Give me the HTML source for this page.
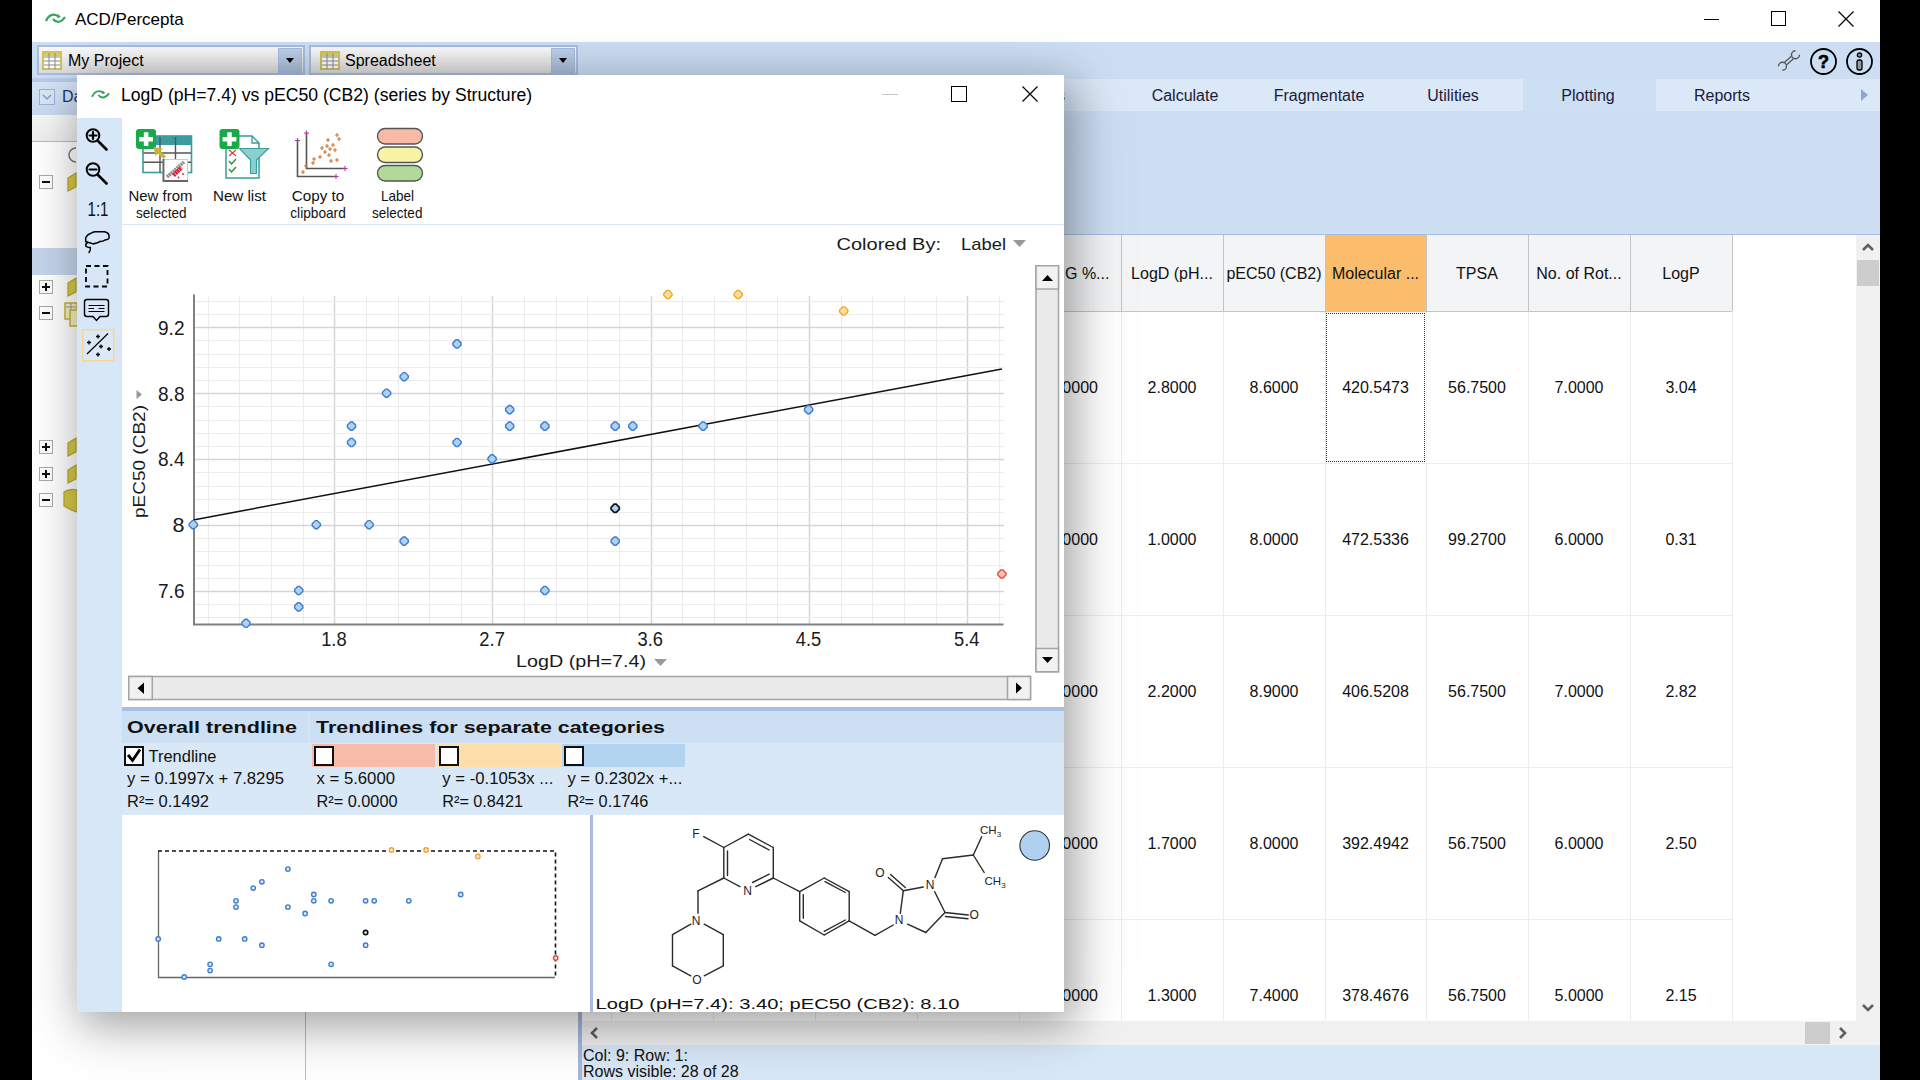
<!DOCTYPE html>
<html><head><meta charset="utf-8"><title>ACD/Percepta</title>
<style>
html,body{margin:0;padding:0;}
body{width:1920px;height:1080px;overflow:hidden;background:#000;position:relative;font-family:"Liberation Sans", sans-serif;}
.t{position:absolute;white-space:pre;line-height:1;font-family:"Liberation Sans", sans-serif;}
.b{position:absolute;box-sizing:border-box;}
svg{position:absolute;overflow:visible;}
</style></head><body>

<div class="b" style="left:32px;top:0px;width:1848px;height:1080px;background:#fff;"></div>
<div class="t" style="left:75px;top:11px;font-size:17px;color:#000;font-weight:400;">ACD/Percepta</div>
<svg style="left:44px;top:10px" width="24" height="18" viewBox="0 0 24 18">
<path d="M2 11 C5 4 11 3 15 7" stroke="#3aa35a" stroke-width="2.2" fill="none"/>
<path d="M9 9 C12 13 17 13 21 7" stroke="#3aa35a" stroke-width="2.2" fill="none"/>
<path d="M14 4 L17 7 L13 8 Z" fill="#3aa35a"/>
</svg>
<div class="b" style="left:1704px;top:19px;width:15px;height:1px;background:#000;"></div>
<div class="b" style="left:1771px;top:11px;width:15px;height:15px;border:1.3px solid #000;"></div>
<svg style="left:1838px;top:11px" width="16" height="16" viewBox="0 0 16 16"><path d="M0.5 0.5 L15.5 15.5 M15.5 0.5 L0.5 15.5" stroke="#000" stroke-width="1.2"/></svg>
<div class="b" style="left:32px;top:42px;width:1848px;height:37px;background:#cddef3;"></div>
<div class="b" style="left:37px;top:45px;width:268px;height:30px;border:2px solid #a9bde0;background:linear-gradient(#fafafa,#dcdcdc);"></div><div class="b" style="left:278px;top:48px;width:24px;height:25px;border:1.5px solid #a8bcdf;background:linear-gradient(#bcd1e8,#a9bdd6);"></div><svg style="left:286px;top:58px" width="8" height="5"><path d="M0 0 L8 0 L4 5 Z" fill="#000"/></svg><svg style="left:42px;top:51px" width="20" height="19" viewBox="0 0 20 19">
<rect x="1" y="1" width="18" height="17" fill="#fff" stroke="#c8b53a" stroke-width="1.6"/>
<rect x="2" y="2" width="16" height="3" fill="#d4d444"/>
<path d="M7 2 V18 M13 2 V18 M2 6 H18 M2 10 H18 M2 14 H18" stroke="#8c8c8c" stroke-width="1"/>
</svg><div class="t" style="left:68px;top:53px;font-size:16px;color:#000;font-weight:400;">My Project</div>
<div class="b" style="left:309px;top:45px;width:269px;height:30px;border:2px solid #a9bde0;background:linear-gradient(#fafafa,#dcdcdc);"></div><div class="b" style="left:551px;top:48px;width:24px;height:25px;border:1.5px solid #a8bcdf;background:linear-gradient(#bcd1e8,#a9bdd6);"></div><svg style="left:559px;top:58px" width="8" height="5"><path d="M0 0 L8 0 L4 5 Z" fill="#000"/></svg><svg style="left:320px;top:51px" width="20" height="19" viewBox="0 0 20 19">
<rect x="1" y="1" width="18" height="17" fill="#fff" stroke="#c8b53a" stroke-width="1.6"/>
<rect x="2" y="2" width="16" height="3" fill="#d4d444"/>
<path d="M7 2 V18 M13 2 V18 M2 6 H18 M2 10 H18 M2 14 H18" stroke="#8c8c8c" stroke-width="1"/>
</svg><div class="t" style="left:345px;top:53px;font-size:16px;color:#000;font-weight:400;">Spreadsheet</div>
<svg style="left:1777px;top:50px" width="24" height="22" viewBox="0 0 24 22">
<path d="M7.5 14.5 L16 7" stroke="#555" stroke-width="4.4" stroke-linecap="round"/>
<path d="M7.5 14.5 L16 7" stroke="#cddef3" stroke-width="1.8" stroke-linecap="round"/>
<path d="M22.5 4.8 A4 4 0 1 1 18.5 0.8" fill="#cddef3" stroke="#555" stroke-width="1.4"/>
<path d="M1.5 16.2 A4 4 0 1 1 5.5 20.2" fill="#cddef3" stroke="#555" stroke-width="1.4"/>
</svg>
<svg style="left:1809px;top:47px" width="30" height="30" viewBox="0 0 30 30">
<circle cx="14.5" cy="14.5" r="12.5" stroke="#000" stroke-width="1.8" fill="none"/>
<text x="14.5" y="21" font-family="Liberation Sans" font-weight="700" font-size="18" text-anchor="middle" fill="#000" stroke="#000" stroke-width="0.6">?</text>
</svg>
<svg style="left:1845px;top:47px" width="30" height="30" viewBox="0 0 30 30">
<circle cx="14.5" cy="14.5" r="12.5" stroke="#000" stroke-width="1.8" fill="none"/>
<circle cx="14.5" cy="8" r="2.2" fill="#888" stroke="#000" stroke-width="1.2"/>
<rect x="12" y="13" width="5" height="10" rx="2" fill="#999" stroke="#000" stroke-width="1.3"/>
</svg>
<div class="b" style="left:32px;top:79px;width:1848px;height:32px;background:#dae8f7;"></div>
<div class="b" style="left:1523px;top:79px;width:133px;height:32px;background:#cddff3;"></div>
<div class="t" style="left:1085px;width:200px;text-align:center;top:88px;font-size:16px;color:#1b1b3a">Calculate</div>
<div class="t" style="left:1219px;width:200px;text-align:center;top:88px;font-size:16px;color:#1b1b3a">Fragmentate</div>
<div class="t" style="left:1353px;width:200px;text-align:center;top:88px;font-size:16px;color:#1b1b3a">Utilities</div>
<div class="t" style="left:1488px;width:200px;text-align:center;top:88px;font-size:16px;color:#1b1b3a">Plotting</div>
<div class="t" style="left:1622px;width:200px;text-align:center;top:88px;font-size:16px;color:#1b1b3a">Reports</div>
<div class="t" style="left:1057px;top:88px;font-size:16px;color:#1b1b3a">s</div>
<svg style="left:1861px;top:89px" width="7" height="12"><path d="M0 0 L7 6 L0 12 Z" fill="#8fa6d6"/></svg>
<div class="b" style="left:32px;top:111px;width:1848px;height:124px;background:#cddef3;"></div>
<div class="b" style="left:32px;top:234px;width:1848px;height:1px;background:#a6bce0;"></div>
<div class="b" style="left:32px;top:78px;width:273px;height:4px;background:#b8cbe8;"></div>
<div class="b" style="left:32px;top:82px;width:273px;height:33px;background:linear-gradient(#d6e4f6,#c9daf0);"></div>
<div class="b" style="left:39px;top:89px;width:16px;height:16px;border:1.5px solid #9fb3d8;background:#d9e6f6;"></div>
<svg style="left:42px;top:94px" width="10" height="6"><path d="M1 1 L5 5 L9 1" stroke="#7b93c6" stroke-width="1.2" fill="none"/></svg>
<div class="t" style="left:62px;top:89px;font-size:16px;color:#1e3470;font-weight:400;">Data</div>
<div class="b" style="left:32px;top:115px;width:273px;height:26px;background:linear-gradient(#f7f7f7,#eeeeee);"></div>
<div class="b" style="left:32px;top:141px;width:273px;height:1px;background:#a6bce0;"></div>
<div class="b" style="left:32px;top:142px;width:273px;height:938px;background:#fff;"></div>
<div class="b" style="left:32px;top:248px;width:273px;height:27px;background:#c5d6ec;"></div>
<div class="b" style="left:39px;top:175px;width:14px;height:14px;border:1.5px solid #aaa;background:#fff;"></div><div class="b" style="left:42px;top:181px;width:8px;height:2px;background:#111;"></div>
<div class="b" style="left:39px;top:280px;width:14px;height:14px;border:1.5px solid #aaa;background:#fff;"></div><div class="b" style="left:42px;top:286px;width:8px;height:2px;background:#111;"></div><div class="b" style="left:45px;top:283px;width:2px;height:8px;background:#111;"></div>
<div class="b" style="left:39px;top:306px;width:14px;height:14px;border:1.5px solid #aaa;background:#fff;"></div><div class="b" style="left:42px;top:312px;width:8px;height:2px;background:#111;"></div>
<div class="b" style="left:39px;top:440px;width:14px;height:14px;border:1.5px solid #aaa;background:#fff;"></div><div class="b" style="left:42px;top:446px;width:8px;height:2px;background:#111;"></div><div class="b" style="left:45px;top:443px;width:2px;height:8px;background:#111;"></div>
<div class="b" style="left:39px;top:467px;width:14px;height:14px;border:1.5px solid #aaa;background:#fff;"></div><div class="b" style="left:42px;top:473px;width:8px;height:2px;background:#111;"></div><div class="b" style="left:45px;top:470px;width:2px;height:8px;background:#111;"></div>
<div class="b" style="left:39px;top:493px;width:14px;height:14px;border:1.5px solid #aaa;background:#fff;"></div><div class="b" style="left:42px;top:499px;width:8px;height:2px;background:#111;"></div>
<svg style="left:0;top:0" width="1920" height="1080"><path d="M68 178 L76 173 V187 L68 191 Z" fill="#d6c94a" stroke="#b7a72a" stroke-width="1.2"/><path d="M68 283 L76 278 V292 L68 296 Z" fill="#d6c94a" stroke="#b7a72a" stroke-width="1.2"/><path d="M68 443 L76 438 V452 L68 456 Z" fill="#d6c94a" stroke="#b7a72a" stroke-width="1.2"/><path d="M68 470 L76 465 V479 L68 483 Z" fill="#d6c94a" stroke="#b7a72a" stroke-width="1.2"/><rect x="65" y="303" width="12" height="16" fill="#f6f0c0" stroke="#c3b43a" stroke-width="1.5"/><path d="M66 307 H76 M71 303 V319" stroke="#999" stroke-width="1"/><rect x="70" y="310" width="8" height="16" fill="#f6f0c0" stroke="#c3b43a" stroke-width="1.5"/><path d="M64 492 Q70 488 77 490 V512 Q70 510 64 506 Z" fill="#d6c94a" stroke="#b7a72a" stroke-width="1.2"/><path d="M76 148 A7 7 0 1 0 76 162" stroke="#777" stroke-width="1.5" fill="none"/></svg>
<div class="b" style="left:305px;top:142px;width:1px;height:938px;background:#a9bde3;"></div>
<div class="b" style="left:578px;top:235px;width:4px;height:845px;background:#a6b8d9;"></div>
<div class="b" style="left:582px;top:235px;width:1274px;height:786px;background:#fff;"></div>
<div class="b" style="left:582px;top:235px;width:1150px;height:76px;background:#f3f4f6;"></div>
<div class="b" style="left:1325px;top:235px;width:101px;height:76px;background:#fbbc6b;"></div>
<div class="b" style="left:582px;top:311px;width:1150px;height:1px;background:#c4c4c4;"></div>
<div class="b" style="left:611px;top:235px;width:1px;height:76px;background:#c4c4c4;"></div>
<div class="b" style="left:611px;top:312px;width:1px;height:709px;background:#ececec;"></div>
<div class="b" style="left:713px;top:235px;width:1px;height:76px;background:#c4c4c4;"></div>
<div class="b" style="left:713px;top:312px;width:1px;height:709px;background:#ececec;"></div>
<div class="b" style="left:815px;top:235px;width:1px;height:76px;background:#c4c4c4;"></div>
<div class="b" style="left:815px;top:312px;width:1px;height:709px;background:#ececec;"></div>
<div class="b" style="left:917px;top:235px;width:1px;height:76px;background:#c4c4c4;"></div>
<div class="b" style="left:917px;top:312px;width:1px;height:709px;background:#ececec;"></div>
<div class="b" style="left:1019px;top:235px;width:1px;height:76px;background:#c4c4c4;"></div>
<div class="b" style="left:1019px;top:312px;width:1px;height:709px;background:#ececec;"></div>
<div class="b" style="left:1121px;top:235px;width:1px;height:76px;background:#c4c4c4;"></div>
<div class="b" style="left:1121px;top:312px;width:1px;height:709px;background:#ececec;"></div>
<div class="b" style="left:1223px;top:235px;width:1px;height:76px;background:#c4c4c4;"></div>
<div class="b" style="left:1223px;top:312px;width:1px;height:709px;background:#ececec;"></div>
<div class="b" style="left:1325px;top:235px;width:1px;height:76px;background:#c4c4c4;"></div>
<div class="b" style="left:1325px;top:312px;width:1px;height:709px;background:#ececec;"></div>
<div class="b" style="left:1426px;top:235px;width:1px;height:76px;background:#c4c4c4;"></div>
<div class="b" style="left:1426px;top:312px;width:1px;height:709px;background:#ececec;"></div>
<div class="b" style="left:1528px;top:235px;width:1px;height:76px;background:#c4c4c4;"></div>
<div class="b" style="left:1528px;top:312px;width:1px;height:709px;background:#ececec;"></div>
<div class="b" style="left:1630px;top:235px;width:1px;height:76px;background:#c4c4c4;"></div>
<div class="b" style="left:1630px;top:312px;width:1px;height:709px;background:#ececec;"></div>
<div class="b" style="left:1732px;top:235px;width:1px;height:76px;background:#c4c4c4;"></div>
<div class="b" style="left:1732px;top:312px;width:1px;height:709px;background:#ececec;"></div>
<div class="b" style="left:582px;top:463px;width:1150px;height:1px;background:#ececec;"></div>
<div class="b" style="left:582px;top:615px;width:1150px;height:1px;background:#ececec;"></div>
<div class="b" style="left:582px;top:767px;width:1150px;height:1px;background:#ececec;"></div>
<div class="b" style="left:582px;top:919px;width:1150px;height:1px;background:#ececec;"></div>
<div class="t" style="left:1065px;top:266px;font-size:16px;color:#111">G %...</div>
<div class="t" style="left:1121px;width:102px;text-align:center;top:266px;font-size:16px;color:#111">LogD (pH...</div>
<div class="t" style="left:1223px;width:102px;text-align:center;top:266px;font-size:16px;color:#111">pEC50 (CB2)</div>
<div class="t" style="left:1325px;width:101px;text-align:center;top:266px;font-size:16px;color:#111">Molecular ...</div>
<div class="t" style="left:1426px;width:102px;text-align:center;top:266px;font-size:16px;color:#111">TPSA</div>
<div class="t" style="left:1528px;width:102px;text-align:center;top:266px;font-size:16px;color:#111">No. of Rot...</div>
<div class="t" style="left:1630px;width:102px;text-align:center;top:266px;font-size:16px;color:#111">LogP</div>
<div class="t" style="left:1049px;top:380px;font-size:16px;color:#111">1.0000</div>
<div class="t" style="left:1121px;width:102px;text-align:center;top:380px;font-size:16px;color:#111">2.8000</div>
<div class="t" style="left:1223px;width:102px;text-align:center;top:380px;font-size:16px;color:#111">8.6000</div>
<div class="t" style="left:1325px;width:101px;text-align:center;top:380px;font-size:16px;color:#111">420.5473</div>
<div class="t" style="left:1426px;width:102px;text-align:center;top:380px;font-size:16px;color:#111">56.7500</div>
<div class="t" style="left:1528px;width:102px;text-align:center;top:380px;font-size:16px;color:#111">7.0000</div>
<div class="t" style="left:1630px;width:102px;text-align:center;top:380px;font-size:16px;color:#111">3.04</div>
<div class="t" style="left:1049px;top:532px;font-size:16px;color:#111">1.0000</div>
<div class="t" style="left:1121px;width:102px;text-align:center;top:532px;font-size:16px;color:#111">1.0000</div>
<div class="t" style="left:1223px;width:102px;text-align:center;top:532px;font-size:16px;color:#111">8.0000</div>
<div class="t" style="left:1325px;width:101px;text-align:center;top:532px;font-size:16px;color:#111">472.5336</div>
<div class="t" style="left:1426px;width:102px;text-align:center;top:532px;font-size:16px;color:#111">99.2700</div>
<div class="t" style="left:1528px;width:102px;text-align:center;top:532px;font-size:16px;color:#111">6.0000</div>
<div class="t" style="left:1630px;width:102px;text-align:center;top:532px;font-size:16px;color:#111">0.31</div>
<div class="t" style="left:1049px;top:684px;font-size:16px;color:#111">1.0000</div>
<div class="t" style="left:1121px;width:102px;text-align:center;top:684px;font-size:16px;color:#111">2.2000</div>
<div class="t" style="left:1223px;width:102px;text-align:center;top:684px;font-size:16px;color:#111">8.9000</div>
<div class="t" style="left:1325px;width:101px;text-align:center;top:684px;font-size:16px;color:#111">406.5208</div>
<div class="t" style="left:1426px;width:102px;text-align:center;top:684px;font-size:16px;color:#111">56.7500</div>
<div class="t" style="left:1528px;width:102px;text-align:center;top:684px;font-size:16px;color:#111">7.0000</div>
<div class="t" style="left:1630px;width:102px;text-align:center;top:684px;font-size:16px;color:#111">2.82</div>
<div class="t" style="left:1049px;top:836px;font-size:16px;color:#111">1.0000</div>
<div class="t" style="left:1121px;width:102px;text-align:center;top:836px;font-size:16px;color:#111">1.7000</div>
<div class="t" style="left:1223px;width:102px;text-align:center;top:836px;font-size:16px;color:#111">8.0000</div>
<div class="t" style="left:1325px;width:101px;text-align:center;top:836px;font-size:16px;color:#111">392.4942</div>
<div class="t" style="left:1426px;width:102px;text-align:center;top:836px;font-size:16px;color:#111">56.7500</div>
<div class="t" style="left:1528px;width:102px;text-align:center;top:836px;font-size:16px;color:#111">6.0000</div>
<div class="t" style="left:1630px;width:102px;text-align:center;top:836px;font-size:16px;color:#111">2.50</div>
<div class="t" style="left:1049px;top:988px;font-size:16px;color:#111">1.0000</div>
<div class="t" style="left:1121px;width:102px;text-align:center;top:988px;font-size:16px;color:#111">1.3000</div>
<div class="t" style="left:1223px;width:102px;text-align:center;top:988px;font-size:16px;color:#111">7.4000</div>
<div class="t" style="left:1325px;width:101px;text-align:center;top:988px;font-size:16px;color:#111">378.4676</div>
<div class="t" style="left:1426px;width:102px;text-align:center;top:988px;font-size:16px;color:#111">56.7500</div>
<div class="t" style="left:1528px;width:102px;text-align:center;top:988px;font-size:16px;color:#111">5.0000</div>
<div class="t" style="left:1630px;width:102px;text-align:center;top:988px;font-size:16px;color:#111">2.15</div>
<div class="b" style="left:1326px;top:313px;width:99px;height:149px;border:1px dotted #333;"></div>
<div class="b" style="left:1856px;top:235px;width:24px;height:786px;background:#f1f1f1;"></div>
<svg style="left:1862px;top:243px" width="12" height="8"><path d="M1 7 L6 2 L11 7" stroke="#606060" stroke-width="2.6" fill="none"/></svg>
<div class="b" style="left:1857px;top:260px;width:22px;height:26px;background:#cdcdcd;"></div>
<svg style="left:1862px;top:1004px" width="12" height="8"><path d="M1 1 L6 6 L11 1" stroke="#606060" stroke-width="2.6" fill="none"/></svg>
<div class="b" style="left:582px;top:1021px;width:1298px;height:24px;background:#f1f1f1;"></div>
<svg style="left:590px;top:1027px" width="8" height="12"><path d="M7 1 L2 6 L7 11" stroke="#606060" stroke-width="2.6" fill="none"/></svg>
<div class="b" style="left:1805px;top:1022px;width:25px;height:22px;background:#cdcdcd;"></div>
<svg style="left:1839px;top:1027px" width="8" height="12"><path d="M1 1 L6 6 L1 11" stroke="#606060" stroke-width="2.6" fill="none"/></svg>
<div class="b" style="left:582px;top:1045px;width:1298px;height:35px;background:#d9e8f7;"></div>
<div class="t" style="left:583px;top:1048px;font-size:16px;color:#111;font-weight:400;">Col: 9: Row: 1:</div>
<div class="t" style="left:583px;top:1064px;font-size:16px;color:#111;font-weight:400;">Rows visible: 28 of 28</div>
<div class="b" style="left:1880px;top:0px;width:40px;height:1080px;background:#000;"></div>
<div class="b" style="left:77px;top:75px;width:987px;height:937px;background:#fff;box-shadow:7px 10px 40px 3px rgba(0,0,0,0.33), 4px 16px 80px 10px rgba(0,0,0,0.06);"></div>
<svg style="left:90px;top:87px" width="22" height="16" viewBox="0 0 24 18">
<path d="M2 11 C5 4 11 3 15 7" stroke="#3aa35a" stroke-width="2.2" fill="none"/>
<path d="M9 9 C12 13 17 13 21 7" stroke="#3aa35a" stroke-width="2.2" fill="none"/>
<path d="M14 4 L17 7 L13 8 Z" fill="#3aa35a"/>
</svg>
<div class="t" style="left:121px;top:87px;font-size:17.6px;color:#000;font-weight:400;">LogD (pH=7.4) vs pEC50 (CB2) (series by Structure)</div>
<div class="b" style="left:882px;top:94px;width:16px;height:1px;background:#c8c8c8;"></div>
<div class="b" style="left:951px;top:86px;width:16px;height:16px;border:1.3px solid #000;"></div>
<svg style="left:1022px;top:86px" width="16" height="16" viewBox="0 0 16 16"><path d="M0.5 0.5 L15.5 15.5 M15.5 0.5 L0.5 15.5" stroke="#000" stroke-width="1.2"/></svg>
<div class="b" style="left:77px;top:118px;width:45px;height:894px;background:#d8e7f7;"></div>
<div class="b" style="left:122px;top:224px;width:942px;height:1px;background:#dbe6f4;"></div>
<svg style="left:0;top:0" width="1920" height="1080">
<g fill="none" stroke="#000" stroke-linecap="round">
 <circle cx="93" cy="135.5" r="6.3" stroke-width="2"/>
 <path d="M89.5 135.5 H96.5 M93 132 V139" stroke-width="2.2"/>
 <path d="M98 141 L106.5 149.5" stroke-width="2.6"/>
 <circle cx="93" cy="169.5" r="6.3" stroke-width="2"/>
 <path d="M89.5 169.5 H96.5" stroke-width="2.2"/>
 <path d="M98 175 L106.5 183.5" stroke-width="2.6"/>
 <path d="M85.7 241.5 V237.8 Q87.5 234 91 233.2 Q93 232 95 231.8 H104.5 Q108 232.3 109 235 V238.3 Q108.3 239.8 105 240 Q103.5 241.5 100 241.5 Q97.5 243 95.5 243.3 Q93 244.5 91.2 243.2 Q88.5 242.5 85.7 241.5 Z" stroke-width="1.5"/>
 <path d="M87.5 242.5 Q85.2 244 86 246.3 Q87.5 247.8 90.3 247.5 Q91 250 89 252.5" stroke-width="1.5"/>
 <rect x="86" y="266" width="21.5" height="20.5" stroke-width="1.8" stroke-dasharray="5 3.5" stroke-linecap="butt"/>
 <path d="M88 299.5 H106 Q108.5 299.5 108.5 302 V314 Q108.5 316.5 106 316.5 H100 L96.5 320.5 L93 316.5 H87 Q84.5 316.5 84.5 314 V302 Q84.5 299.5 87 299.5 Z" stroke-width="1.4"/>
 <path d="M88.5 305.5 H104.5 M88.5 308.5 H94 M98.5 308.5 H104.5 M88.5 311.5 H104.5" stroke-width="1.2" stroke-linecap="butt"/>
</g>
<rect x="82.75" y="329.75" width="31" height="31" fill="#dbe8f7" stroke="#fbd68a" stroke-width="1.5"/>
<path d="M87 354 L108 333.5" stroke="#000" stroke-width="1.2"/>
<g stroke="#000" stroke-width="1.3">
 <path d="M87 342.5 H91 M89 340.5 V344.5"/>
 <path d="M96 336.5 H100 M98 334.5 V338.5"/>
 <path d="M99 346.5 H103 M101 344.5 V348.5"/>
 <path d="M107 349 H111 M109 347 V351"/>
 <path d="M96 354.5 H100 M98 352.5 V356.5"/>
</g>
<text x="98" y="215.5" font-family="Liberation Sans" font-size="20" text-anchor="middle" textLength="21" lengthAdjust="spacingAndGlyphs" fill="#111">1:1</text>
</svg>
<svg style="left:0;top:0" width="1920" height="1080">
<!-- New from selected -->
<rect x="143" y="136" width="48.5" height="36.5" fill="#fff" stroke="#3a9c9c" stroke-width="1.6"/>
<rect x="143" y="136" width="48.5" height="9" fill="#3a9c9c"/>
<path d="M160 137 V172 M175.5 137 V172 M143.5 153 H191 M143.5 162.2 H191" stroke="#555" stroke-width="1.4"/>
<rect x="136" y="129" width="20" height="20" rx="3" fill="#19a94a"/>
<path d="M146.1 132.2 V146.1 M139.2 139.3 H153" stroke="#fff" stroke-width="4.5"/>
<path d="M153.5 147 L163 148.5 L160.5 151 L166 156.5 L163.5 159 L158 153.5 L155.5 156 Z" fill="#c9b43a"/>
<rect x="163" y="159.5" width="24.5" height="21.5" fill="#fff" stroke="#ccc" stroke-width="1"/>
<path d="M163.5 159 V181 H188" fill="none" stroke="#666" stroke-width="1.8"/>
<path d="M167 177 L184 162" stroke="#8f8f8f" stroke-width="3.6" stroke-dasharray="2 0.6"/>
<path d="M173.5 175.5 L181.5 167.5" stroke="#d81e28" stroke-width="4.2" stroke-dasharray="2.2 0.5"/>
<circle cx="178.5" cy="177.5" r="0.9" fill="#e0202a"/><circle cx="183" cy="174" r="0.9" fill="#e0202a"/>
<!-- New list -->
<path d="M226 136 H252 L259 143 V178 H226 Z" fill="#fff" stroke="#3a9c9c" stroke-width="1.5"/>
<path d="M252 136 V143 H259" fill="none" stroke="#3a9c9c" stroke-width="1.3"/>
<rect x="219.5" y="129" width="20" height="20" rx="3" fill="#19a94a"/>
<path d="M229.5 132.2 V146.1 M222.6 139.3 H236.4" stroke="#fff" stroke-width="4.5"/>
<path d="M229 150 L236 156 M236 150 L229 156" stroke="#e23a3a" stroke-width="1.2"/>
<path d="M229 161 L231.5 164 L236 159 M229 169 L231.5 172 L236 167" stroke="#2a8a3a" stroke-width="1.3" fill="none"/>
<path d="M239.5 148.5 H268.5 L256.5 160 V173.5 H250.5 V160 Z" fill="#8ad0ce" stroke="#3a9c9c" stroke-width="1.1"/>
<!-- Copy to clipboard -->
<path d="M297.5 140 V176.5 H335" stroke="#555" stroke-width="1.6" fill="none"/>
<path d="M306.5 133 V168.5 H344" stroke="#555" stroke-width="1.6" fill="none"/>
<g stroke="#a03aa0" stroke-width="1.1">
 <path d="M295 140.5 H300 M297.5 138 V143"/><path d="M304 133 H309 M306.5 130.5 V135.5"/>
 <path d="M333.5 176.5 H338.5 M336 174 V179"/><path d="M342.5 168.5 H347.5 M345 166 V171"/>
</g>
<g stroke="#d27a35" stroke-width="1.2">
 <path d="M301 172 h4 M303 170 v4"/><path d="M304 166 h4 M306 164 v4"/><path d="M311 163 h4 M313 161 v4"/>
 <path d="M312 159 h4 M314 157 v4"/><path d="M318 157 h4 M320 155 v4"/><path d="M320 148 h4 M322 146 v4"/>
 <path d="M323 152 h4 M325 150 v4"/><path d="M325 146 h4 M327 144 v4"/><path d="M327 155 h4 M329 153 v4"/>
 <path d="M328 149 h4 M330 147 v4"/><path d="M326 140 h4 M328 138 v4"/><path d="M331 145 h4 M333 143 v4"/>
 <path d="M333 150 h4 M335 148 v4"/><path d="M335 135 h4 M337 133 v4"/><path d="M337 139 h4 M339 137 v4"/>
 <path d="M335 160 h4 M337 158 v4"/><path d="M329 161 h4 M331 159 v4"/>
</g>
<!-- Label selected -->
<rect x="377.5" y="128.5" width="45" height="15.5" rx="7.7" fill="#f8bba7" stroke="#555" stroke-width="1.4"/>
<rect x="377.5" y="147" width="45" height="15.5" rx="7.7" fill="#f7f4a6" stroke="#555" stroke-width="1.4"/>
<rect x="377.5" y="165.5" width="45" height="15.5" rx="7.7" fill="#b2d89a" stroke="#555" stroke-width="1.4"/>
</svg>
<svg style="left:0;top:0" width="1920" height="1080"><text x="160.5" y="201" font-family="Liberation Sans" font-size="15" font-weight="400" text-anchor="middle" fill="#111" textLength="64" lengthAdjust="spacingAndGlyphs" >New from</text><text x="161.3" y="218" font-family="Liberation Sans" font-size="15" font-weight="400" text-anchor="middle" fill="#111" textLength="50.5" lengthAdjust="spacingAndGlyphs" >selected</text><text x="239.5" y="201" font-family="Liberation Sans" font-size="15" font-weight="400" text-anchor="middle" fill="#111" textLength="53" lengthAdjust="spacingAndGlyphs" >New list</text><text x="318" y="201" font-family="Liberation Sans" font-size="15" font-weight="400" text-anchor="middle" fill="#111" textLength="52.5" lengthAdjust="spacingAndGlyphs" >Copy to</text><text x="318" y="218" font-family="Liberation Sans" font-size="15" font-weight="400" text-anchor="middle" fill="#111" textLength="55.5" lengthAdjust="spacingAndGlyphs" >clipboard</text><text x="397.5" y="201" font-family="Liberation Sans" font-size="15" font-weight="400" text-anchor="middle" fill="#111" textLength="33" lengthAdjust="spacingAndGlyphs" >Label</text><text x="397.2" y="218" font-family="Liberation Sans" font-size="15" font-weight="400" text-anchor="middle" fill="#111" textLength="50.5" lengthAdjust="spacingAndGlyphs" >selected</text></svg>
<svg style="left:0;top:0" width="1920" height="1080"><text x="941" y="249.8" font-family="Liberation Sans" font-size="17" font-weight="400" text-anchor="end" fill="#1a1a1a" textLength="104.5" lengthAdjust="spacingAndGlyphs" >Colored By:</text><text x="961" y="249.8" font-family="Liberation Sans" font-size="17" font-weight="400" text-anchor="start" fill="#1a1a1a" textLength="45" lengthAdjust="spacingAndGlyphs" >Label</text><path d="M1013 240 H1026 L1019.5 247 Z" fill="#999"/><path d="M208.5 296 V624" stroke="#ececec" stroke-width="1"/><path d="M239.5 296 V624" stroke="#ececec" stroke-width="1"/><path d="M271.5 296 V624" stroke="#ececec" stroke-width="1"/><path d="M303.5 296 V624" stroke="#ececec" stroke-width="1"/><path d="M334.5 296 V624" stroke="#d5d5d5" stroke-width="1.5"/><path d="M366.5 296 V624" stroke="#ececec" stroke-width="1"/><path d="M398.5 296 V624" stroke="#ececec" stroke-width="1"/><path d="M429.5 296 V624" stroke="#ececec" stroke-width="1"/><path d="M461.5 296 V624" stroke="#ececec" stroke-width="1"/><path d="M492.5 296 V624" stroke="#d5d5d5" stroke-width="1.5"/><path d="M524.5 296 V624" stroke="#ececec" stroke-width="1"/><path d="M556.5 296 V624" stroke="#ececec" stroke-width="1"/><path d="M587.5 296 V624" stroke="#ececec" stroke-width="1"/><path d="M619.5 296 V624" stroke="#ececec" stroke-width="1"/><path d="M651.5 296 V624" stroke="#d5d5d5" stroke-width="1.5"/><path d="M682.5 296 V624" stroke="#ececec" stroke-width="1"/><path d="M714.5 296 V624" stroke="#ececec" stroke-width="1"/><path d="M746.5 296 V624" stroke="#ececec" stroke-width="1"/><path d="M777.5 296 V624" stroke="#ececec" stroke-width="1"/><path d="M809.5 296 V624" stroke="#d5d5d5" stroke-width="1.5"/><path d="M841.5 296 V624" stroke="#ececec" stroke-width="1"/><path d="M872.5 296 V624" stroke="#ececec" stroke-width="1"/><path d="M904.5 296 V624" stroke="#ececec" stroke-width="1"/><path d="M936.5 296 V624" stroke="#ececec" stroke-width="1"/><path d="M967.5 296 V624" stroke="#d5d5d5" stroke-width="1.5"/><path d="M999.5 296 V624" stroke="#ececec" stroke-width="1"/><path d="M194 617.5 H1004" stroke="#ececec" stroke-width="1"/><path d="M194 604.5 H1004" stroke="#ececec" stroke-width="1"/><path d="M194 591.5 H1004" stroke="#d5d5d5" stroke-width="1.5"/><path d="M194 578.5 H1004" stroke="#ececec" stroke-width="1"/><path d="M194 565.5 H1004" stroke="#ececec" stroke-width="1"/><path d="M194 551.5 H1004" stroke="#ececec" stroke-width="1"/><path d="M194 538.5 H1004" stroke="#ececec" stroke-width="1"/><path d="M194 525.5 H1004" stroke="#d5d5d5" stroke-width="1.5"/><path d="M194 512.5 H1004" stroke="#ececec" stroke-width="1"/><path d="M194 499.5 H1004" stroke="#ececec" stroke-width="1"/><path d="M194 486.5 H1004" stroke="#ececec" stroke-width="1"/><path d="M194 472.5 H1004" stroke="#ececec" stroke-width="1"/><path d="M194 459.5 H1004" stroke="#d5d5d5" stroke-width="1.5"/><path d="M194 446.5 H1004" stroke="#ececec" stroke-width="1"/><path d="M194 433.5 H1004" stroke="#ececec" stroke-width="1"/><path d="M194 420.5 H1004" stroke="#ececec" stroke-width="1"/><path d="M194 406.5 H1004" stroke="#ececec" stroke-width="1"/><path d="M194 393.5 H1004" stroke="#d5d5d5" stroke-width="1.5"/><path d="M194 380.5 H1004" stroke="#ececec" stroke-width="1"/><path d="M194 367.5 H1004" stroke="#ececec" stroke-width="1"/><path d="M194 354.5 H1004" stroke="#ececec" stroke-width="1"/><path d="M194 340.5 H1004" stroke="#ececec" stroke-width="1"/><path d="M194 327.5 H1004" stroke="#d5d5d5" stroke-width="1.5"/><path d="M194 314.5 H1004" stroke="#ececec" stroke-width="1"/><path d="M194 301.5 H1004" stroke="#ececec" stroke-width="1"/><path d="M194 294.5 V624.5 H1003.5" fill="none" stroke="#808080" stroke-width="2"/><text x="184.5" y="334.9200000000002" font-family="Liberation Sans" font-size="20" font-weight="400" text-anchor="end" fill="#1a1a1a" textLength="26.5" lengthAdjust="spacingAndGlyphs" >9.2</text><text x="184.5" y="400.67999999999995" font-family="Liberation Sans" font-size="20" font-weight="400" text-anchor="end" fill="#1a1a1a" textLength="26.5" lengthAdjust="spacingAndGlyphs" >8.8</text><text x="184.5" y="466.44" font-family="Liberation Sans" font-size="20" font-weight="400" text-anchor="end" fill="#1a1a1a" textLength="26.5" lengthAdjust="spacingAndGlyphs" >8.4</text><text x="184.5" y="532.2" font-family="Liberation Sans" font-size="20" font-weight="400" text-anchor="end" fill="#1a1a1a" textLength="12" lengthAdjust="spacingAndGlyphs" >8</text><text x="184.5" y="597.9600000000002" font-family="Liberation Sans" font-size="20" font-weight="400" text-anchor="end" fill="#1a1a1a" textLength="26.5" lengthAdjust="spacingAndGlyphs" >7.6</text><text x="333.9" y="646.3" font-family="Liberation Sans" font-size="20" font-weight="400" text-anchor="middle" fill="#1a1a1a" textLength="25.5" lengthAdjust="spacingAndGlyphs" >1.8</text><text x="492.12" y="646.3" font-family="Liberation Sans" font-size="20" font-weight="400" text-anchor="middle" fill="#1a1a1a" textLength="25.5" lengthAdjust="spacingAndGlyphs" >2.7</text><text x="650.34" y="646.3" font-family="Liberation Sans" font-size="20" font-weight="400" text-anchor="middle" fill="#1a1a1a" textLength="25.5" lengthAdjust="spacingAndGlyphs" >3.6</text><text x="808.5600000000001" y="646.3" font-family="Liberation Sans" font-size="20" font-weight="400" text-anchor="middle" fill="#1a1a1a" textLength="25.5" lengthAdjust="spacingAndGlyphs" >4.5</text><text x="966.7800000000001" y="646.3" font-family="Liberation Sans" font-size="20" font-weight="400" text-anchor="middle" fill="#1a1a1a" textLength="25.5" lengthAdjust="spacingAndGlyphs" >5.4</text><g transform="translate(145 461.5) rotate(-90)"><text x="0" y="0" font-family="Liberation Sans" font-size="17" font-weight="400" text-anchor="middle" fill="#1a1a1a" textLength="113" lengthAdjust="spacingAndGlyphs" >pEC50 (CB2)</text></g><path d="M136.5 390 L142 394.5 L136.5 399 Z" fill="#999"/><text x="516" y="667" font-family="Liberation Sans" font-size="17" font-weight="400" text-anchor="start" fill="#1a1a1a" textLength="130" lengthAdjust="spacingAndGlyphs" >LogD (pH=7.4)</text><path d="M654 659 H667 L660.5 666 Z" fill="#999"/><path d="M193.3 519.9 L1001.9 368.9" stroke="#111" stroke-width="1.5"/><path d="M456.0 339.8 L458.0 339.8 L461.1 342.9 L461.1 344.9 L458.0 348.0 L456.0 348.0 L452.9 344.9 L452.9 342.9 Z" fill="#aed2f3" stroke="#3f7ccf" stroke-width="1.4"/><path d="M403.2 372.6 L405.2 372.6 L408.3 375.7 L408.3 377.7 L405.2 380.8 L403.2 380.8 L400.1 377.7 L400.1 375.7 Z" fill="#aed2f3" stroke="#3f7ccf" stroke-width="1.4"/><path d="M385.6 389.1 L387.6 389.1 L390.7 392.2 L390.7 394.2 L387.6 397.3 L385.6 397.3 L382.5 394.2 L382.5 392.2 Z" fill="#aed2f3" stroke="#3f7ccf" stroke-width="1.4"/><path d="M350.5 422.0 L352.5 422.0 L355.6 425.1 L355.6 427.1 L352.5 430.2 L350.5 430.2 L347.4 427.1 L347.4 425.1 Z" fill="#aed2f3" stroke="#3f7ccf" stroke-width="1.4"/><path d="M350.5 438.4 L352.5 438.4 L355.6 441.5 L355.6 443.5 L352.5 446.6 L350.5 446.6 L347.4 443.5 L347.4 441.5 Z" fill="#aed2f3" stroke="#3f7ccf" stroke-width="1.4"/><path d="M456.0 438.4 L458.0 438.4 L461.1 441.5 L461.1 443.5 L458.0 446.6 L456.0 446.6 L452.9 443.5 L452.9 441.5 Z" fill="#aed2f3" stroke="#3f7ccf" stroke-width="1.4"/><path d="M508.7 405.5 L510.7 405.5 L513.8 408.6 L513.8 410.6 L510.7 413.7 L508.7 413.7 L505.6 410.6 L505.6 408.6 Z" fill="#aed2f3" stroke="#3f7ccf" stroke-width="1.4"/><path d="M508.7 422.0 L510.7 422.0 L513.8 425.1 L513.8 427.1 L510.7 430.2 L508.7 430.2 L505.6 427.1 L505.6 425.1 Z" fill="#aed2f3" stroke="#3f7ccf" stroke-width="1.4"/><path d="M543.9 422.0 L545.9 422.0 L549.0 425.1 L549.0 427.1 L545.9 430.2 L543.9 430.2 L540.8 427.1 L540.8 425.1 Z" fill="#aed2f3" stroke="#3f7ccf" stroke-width="1.4"/><path d="M491.1 454.8 L493.1 454.8 L496.2 457.9 L496.2 459.9 L493.1 463.0 L491.1 463.0 L488.0 459.9 L488.0 457.9 Z" fill="#aed2f3" stroke="#3f7ccf" stroke-width="1.4"/><path d="M614.2 422.0 L616.2 422.0 L619.3 425.1 L619.3 427.1 L616.2 430.2 L614.2 430.2 L611.1 427.1 L611.1 425.1 Z" fill="#aed2f3" stroke="#3f7ccf" stroke-width="1.4"/><path d="M631.8 422.0 L633.8 422.0 L636.9 425.1 L636.9 427.1 L633.8 430.2 L631.8 430.2 L628.7 427.1 L628.7 425.1 Z" fill="#aed2f3" stroke="#3f7ccf" stroke-width="1.4"/><path d="M702.1 422.0 L704.1 422.0 L707.2 425.1 L707.2 427.1 L704.1 430.2 L702.1 430.2 L699.0 427.1 L699.0 425.1 Z" fill="#aed2f3" stroke="#3f7ccf" stroke-width="1.4"/><path d="M807.6 405.5 L809.6 405.5 L812.7 408.6 L812.7 410.6 L809.6 413.7 L807.6 413.7 L804.5 410.6 L804.5 408.6 Z" fill="#aed2f3" stroke="#3f7ccf" stroke-width="1.4"/><path d="M614.2 537.0 L616.2 537.0 L619.3 540.1 L619.3 542.1 L616.2 545.2 L614.2 545.2 L611.1 542.1 L611.1 540.1 Z" fill="#aed2f3" stroke="#3f7ccf" stroke-width="1.4"/><path d="M543.9 586.4 L545.9 586.4 L549.0 589.5 L549.0 591.5 L545.9 594.6 L543.9 594.6 L540.8 591.5 L540.8 589.5 Z" fill="#aed2f3" stroke="#3f7ccf" stroke-width="1.4"/><path d="M192.3 520.6 L194.3 520.6 L197.4 523.7 L197.4 525.7 L194.3 528.8 L192.3 528.8 L189.2 525.7 L189.2 523.7 Z" fill="#aed2f3" stroke="#3f7ccf" stroke-width="1.4"/><path d="M315.3 520.6 L317.3 520.6 L320.4 523.7 L320.4 525.7 L317.3 528.8 L315.3 528.8 L312.2 525.7 L312.2 523.7 Z" fill="#aed2f3" stroke="#3f7ccf" stroke-width="1.4"/><path d="M368.1 520.6 L370.1 520.6 L373.2 523.7 L373.2 525.7 L370.1 528.8 L368.1 528.8 L365.0 525.7 L365.0 523.7 Z" fill="#aed2f3" stroke="#3f7ccf" stroke-width="1.4"/><path d="M403.2 537.0 L405.2 537.0 L408.3 540.1 L408.3 542.1 L405.2 545.2 L403.2 545.2 L400.1 542.1 L400.1 540.1 Z" fill="#aed2f3" stroke="#3f7ccf" stroke-width="1.4"/><path d="M297.7 586.4 L299.7 586.4 L302.8 589.5 L302.8 591.5 L299.7 594.6 L297.7 594.6 L294.6 591.5 L294.6 589.5 Z" fill="#aed2f3" stroke="#3f7ccf" stroke-width="1.4"/><path d="M297.7 602.8 L299.7 602.8 L302.8 605.9 L302.8 607.9 L299.7 611.0 L297.7 611.0 L294.6 607.9 L294.6 605.9 Z" fill="#aed2f3" stroke="#3f7ccf" stroke-width="1.4"/><path d="M245.0 619.2 L247.0 619.2 L250.1 622.3 L250.1 624.3 L247.0 627.4 L245.0 627.4 L241.9 624.3 L241.9 622.3 Z" fill="#aed2f3" stroke="#3f7ccf" stroke-width="1.4"/><path d="M666.9 290.4 L668.9 290.4 L672.0 293.5 L672.0 295.5 L668.9 298.6 L666.9 298.6 L663.8 295.5 L663.8 293.5 Z" fill="#fde0a6" stroke="#f6a623" stroke-width="1.4"/><path d="M737.2 290.4 L739.2 290.4 L742.3 293.5 L742.3 295.5 L739.2 298.6 L737.2 298.6 L734.1 295.5 L734.1 293.5 Z" fill="#fde0a6" stroke="#f6a623" stroke-width="1.4"/><path d="M842.7 306.9 L844.7 306.9 L847.8 310.0 L847.8 312.0 L844.7 315.1 L842.7 315.1 L839.6 312.0 L839.6 310.0 Z" fill="#fde0a6" stroke="#f6a623" stroke-width="1.4"/><path d="M1000.9 569.9 L1002.9 569.9 L1006.0 573.0 L1006.0 575.0 L1002.9 578.1 L1000.9 578.1 L997.8 575.0 L997.8 573.0 Z" fill="#f9c0b4" stroke="#ea4b3c" stroke-width="1.4"/><path d="M614.2 504.2 L616.2 504.2 L619.3 507.3 L619.3 509.3 L616.2 512.4 L614.2 512.4 L611.1 509.3 L611.1 507.3 Z" fill="#aed2f3" stroke="#111" stroke-width="1.7"/><rect x="1036" y="265.75" width="22.5" height="406" fill="#eaeaea" stroke="#a4a4a4" stroke-width="1.5"/><rect x="1036" y="265.75" width="22.5" height="23.25" fill="#f2f2f2" stroke="#a4a4a4" stroke-width="1.5"/><rect x="1036" y="648.5" width="22.5" height="23.25" fill="#f2f2f2" stroke="#a4a4a4" stroke-width="1.5"/><path d="M1042 281 H1053 L1047.5 275 Z" fill="#000"/><path d="M1042 657 H1053 L1047.5 663 Z" fill="#000"/><rect x="128.75" y="676.5" width="901.75" height="23" fill="#eaeaea" stroke="#a4a4a4" stroke-width="1.5"/><rect x="128.75" y="676.5" width="23.5" height="23" fill="#f2f2f2" stroke="#a4a4a4" stroke-width="1.5"/><rect x="1007.5" y="676.5" width="23" height="23" fill="#f2f2f2" stroke="#a4a4a4" stroke-width="1.5"/><path d="M144 682.5 V694 L137.5 688.25 Z" fill="#000"/><path d="M1016 682.5 V693.5 L1022 688 Z" fill="#000"/></svg>
<div class="b" style="left:122px;top:707px;width:942px;height:4px;background:#abbee3;"></div>
<div class="b" style="left:122px;top:711px;width:942px;height:32px;background:#cddff3;"></div>
<div class="b" style="left:308px;top:711px;width:2px;height:32px;background:#d6e5f6;"></div>
<div class="b" style="left:122px;top:743px;width:942px;height:72px;background:#d9e8f7;"></div>
<div class="b" style="left:312px;top:744px;width:123px;height:23px;background:#f9bba9;"></div>
<div class="b" style="left:437px;top:744px;width:124px;height:23px;background:#fde0a9;"></div>
<div class="b" style="left:562px;top:744px;width:123px;height:23px;background:#b3d4f1;"></div>
<div class="b" style="left:124px;top:746px;width:20px;height:20px;border:2px solid #111;background:#fff;"></div>
<div class="b" style="left:314px;top:746px;width:20px;height:20px;border:2px solid #111;background:#fff;"></div>
<div class="b" style="left:439px;top:746px;width:20px;height:20px;border:2px solid #111;background:#fff;"></div>
<div class="b" style="left:564px;top:746px;width:20px;height:20px;border:2px solid #111;background:#fff;"></div>
<svg style="left:0;top:0" width="1920" height="1080"><path d="M128 755 L132.5 760.5 L140 749.5" stroke="#000" stroke-width="2.8" fill="none"/><text x="127" y="733" font-family="Liberation Sans" font-size="17" font-weight="700" text-anchor="start" fill="#111" textLength="170" lengthAdjust="spacingAndGlyphs" >Overall trendline</text><text x="316" y="733" font-family="Liberation Sans" font-size="17" font-weight="700" text-anchor="start" fill="#111" textLength="349" lengthAdjust="spacingAndGlyphs" >Trendlines for separate categories</text><text x="148.5" y="762" font-family="Liberation Sans" font-size="16" font-weight="400" text-anchor="start" fill="#111" textLength="68" lengthAdjust="spacingAndGlyphs" >Trendline</text><text x="127" y="784" font-family="Liberation Sans" font-size="16" font-weight="400" text-anchor="start" fill="#111" textLength="157" lengthAdjust="spacingAndGlyphs" >y = 0.1997x + 7.8295</text><text x="127" y="807" font-family="Liberation Sans" font-size="16" font-weight="400" text-anchor="start" fill="#111" textLength="82" lengthAdjust="spacingAndGlyphs" >R²= 0.1492</text><text x="316.5" y="784" font-family="Liberation Sans" font-size="16" font-weight="400" text-anchor="start" fill="#111" textLength="78.5" lengthAdjust="spacingAndGlyphs" >x = 5.6000</text><text x="316.5" y="807" font-family="Liberation Sans" font-size="16" font-weight="400" text-anchor="start" fill="#111" textLength="81" lengthAdjust="spacingAndGlyphs" >R²= 0.0000</text><text x="442.3" y="784" font-family="Liberation Sans" font-size="16" font-weight="400" text-anchor="start" fill="#111" textLength="111" lengthAdjust="spacingAndGlyphs" >y = -0.1053x ...</text><text x="442.3" y="807" font-family="Liberation Sans" font-size="16" font-weight="400" text-anchor="start" fill="#111" textLength="80.6" lengthAdjust="spacingAndGlyphs" >R²= 0.8421</text><text x="567.4" y="784" font-family="Liberation Sans" font-size="16" font-weight="400" text-anchor="start" fill="#111" textLength="115" lengthAdjust="spacingAndGlyphs" >y = 0.2302x +...</text><text x="567.4" y="807" font-family="Liberation Sans" font-size="16" font-weight="400" text-anchor="start" fill="#111" textLength="81" lengthAdjust="spacingAndGlyphs" >R²= 0.1746</text></svg>
<div class="b" style="left:590px;top:815px;width:3px;height:197px;background:#a9bbe3;"></div>
<svg style="left:0;top:0" width="1920" height="1080"><path d="M158.5 851 V977.5 H555" fill="none" stroke="#666" stroke-width="1.3"/><path d="M158 851 H555.5 V977" fill="none" stroke="#111" stroke-width="1.6" stroke-dasharray="4 3"/><circle cx="287.9" cy="869.1" r="2.2" fill="#dbe9f8" stroke="#3f7fcf" stroke-width="1.4"/><circle cx="261.9" cy="881.8" r="2.2" fill="#dbe9f8" stroke="#3f7fcf" stroke-width="1.4"/><circle cx="253.3" cy="888.1" r="2.2" fill="#dbe9f8" stroke="#3f7fcf" stroke-width="1.4"/><circle cx="236.0" cy="900.8" r="2.2" fill="#dbe9f8" stroke="#3f7fcf" stroke-width="1.4"/><circle cx="236.0" cy="907.1" r="2.2" fill="#dbe9f8" stroke="#3f7fcf" stroke-width="1.4"/><circle cx="287.9" cy="907.1" r="2.2" fill="#dbe9f8" stroke="#3f7fcf" stroke-width="1.4"/><circle cx="313.8" cy="894.5" r="2.2" fill="#dbe9f8" stroke="#3f7fcf" stroke-width="1.4"/><circle cx="313.8" cy="900.8" r="2.2" fill="#dbe9f8" stroke="#3f7fcf" stroke-width="1.4"/><circle cx="331.1" cy="900.8" r="2.2" fill="#dbe9f8" stroke="#3f7fcf" stroke-width="1.4"/><circle cx="305.1" cy="913.5" r="2.2" fill="#dbe9f8" stroke="#3f7fcf" stroke-width="1.4"/><circle cx="365.6" cy="900.8" r="2.2" fill="#dbe9f8" stroke="#3f7fcf" stroke-width="1.4"/><circle cx="374.2" cy="900.8" r="2.2" fill="#dbe9f8" stroke="#3f7fcf" stroke-width="1.4"/><circle cx="408.8" cy="900.8" r="2.2" fill="#dbe9f8" stroke="#3f7fcf" stroke-width="1.4"/><circle cx="460.7" cy="894.5" r="2.2" fill="#dbe9f8" stroke="#3f7fcf" stroke-width="1.4"/><circle cx="365.6" cy="945.2" r="2.2" fill="#dbe9f8" stroke="#3f7fcf" stroke-width="1.4"/><circle cx="331.1" cy="964.3" r="2.2" fill="#dbe9f8" stroke="#3f7fcf" stroke-width="1.4"/><circle cx="158.2" cy="938.9" r="2.2" fill="#dbe9f8" stroke="#3f7fcf" stroke-width="1.4"/><circle cx="218.7" cy="938.9" r="2.2" fill="#dbe9f8" stroke="#3f7fcf" stroke-width="1.4"/><circle cx="244.7" cy="938.9" r="2.2" fill="#dbe9f8" stroke="#3f7fcf" stroke-width="1.4"/><circle cx="261.9" cy="945.2" r="2.2" fill="#dbe9f8" stroke="#3f7fcf" stroke-width="1.4"/><circle cx="210.1" cy="964.3" r="2.2" fill="#dbe9f8" stroke="#3f7fcf" stroke-width="1.4"/><circle cx="210.1" cy="970.6" r="2.2" fill="#dbe9f8" stroke="#3f7fcf" stroke-width="1.4"/><circle cx="184.2" cy="977.0" r="2.2" fill="#dbe9f8" stroke="#3f7fcf" stroke-width="1.4"/><circle cx="391.5" cy="850.0" r="2.2" fill="#fdeccc" stroke="#f2a23a" stroke-width="1.4"/><circle cx="426.1" cy="850.0" r="2.2" fill="#fdeccc" stroke="#f2a23a" stroke-width="1.4"/><circle cx="477.9" cy="856.4" r="2.2" fill="#fdeccc" stroke="#f2a23a" stroke-width="1.4"/><circle cx="555.7" cy="958.0" r="2.2" fill="#fbd8d2" stroke="#e84a3a" stroke-width="1.4"/><circle cx="365.6" cy="932.6" r="2.2" fill="#dbe9f8" stroke="#111" stroke-width="1.6"/></svg>
<svg style="left:0;top:0" width="1920" height="1080"><g stroke="#2a2a2a" stroke-width="1.4" fill="none" stroke-linecap="round"><path d="M703.7 836.7 L723.8 847.5"/><path d="M723.8 847.5 L748.3 834.2"/><path d="M748.3 834.2 L773.3 847.5"/><path d="M773.3 847.5 L773.3 878"/><path d="M773.3 878 L755.8 886.7"/><path d="M740 886.7 L723.8 878"/><path d="M723.8 878 L723.8 847.5"/><path d="M749.6 839.5 L769.2 850"/><path d="M727.5 851 L727.5 875.5"/><path d="M752.5 882.5 L769.2 874.2"/><path d="M723.8 878 L698 890.8"/><path d="M698 890.8 L698 913.3"/><path d="M704.2 924.2 L723.3 934.7"/><path d="M723.3 934.7 L723.3 965.8"/><path d="M723.3 965.8 L704.2 975.8"/><path d="M690.8 975.8 L672.5 965.8"/><path d="M672.5 965.8 L672.5 934.7"/><path d="M672.5 934.7 L690.8 924.2"/><path d="M773.3 878 L799.7 891.7"/><path d="M799.7 891.7 L824.2 878"/><path d="M824.2 878 L849.2 891.7"/><path d="M849.2 891.7 L849.2 920.8"/><path d="M849.2 920.8 L824.2 935"/><path d="M824.2 935 L799.7 920.8"/><path d="M799.7 920.8 L799.7 891.7"/><path d="M825 881.7 L845.3 892.5"/><path d="M803.3 894.7 L803.3 918.3"/><path d="M824.2 931.3 L845.3 920"/><path d="M849.2 920.8 L875 935.3"/><path d="M875 935.3 L893.3 925"/><path d="M900.3 913.3 L903.3 890.8"/><path d="M903.3 890.8 L923.3 887"/><path d="M934.7 891.7 L945 912.5"/><path d="M945 912.5 L925.8 932.5"/><path d="M925.8 932.5 L907.5 924.2"/><path d="M903.3 890.8 L888.3 877.5"/><path d="M905.3 887.5 L890.5 874.5"/><path d="M945 912.5 L968.3 915"/><path d="M945.5 916.5 L968 918.8"/><path d="M935 877.5 L942.5 858.7"/><path d="M942.5 858.7 L973.3 855"/><path d="M973.3 855 L981.7 836.7"/><path d="M973.3 855 L984.2 872.5"/></g><text x="696" y="837.5999999999999" font-family="Liberation Sans" font-size="12" text-anchor="middle" fill="#222">F</text><text x="747.5" y="895.0999999999999" font-family="Liberation Sans" font-size="12" text-anchor="middle" fill="#222">N</text><text x="696" y="924.5999999999999" font-family="Liberation Sans" font-size="12" text-anchor="middle" fill="#222">N</text><text x="697" y="983.5" font-family="Liberation Sans" font-size="12" text-anchor="middle" fill="#222">O</text><text x="899.2" y="924.3" font-family="Liberation Sans" font-size="12" text-anchor="middle" fill="#222">N</text><text x="930" y="888.5" font-family="Liberation Sans" font-size="12" text-anchor="middle" fill="#222">N</text><text x="880" y="876.8" font-family="Liberation Sans" font-size="12" text-anchor="middle" fill="#222">O</text><text x="974.2" y="918.5" font-family="Liberation Sans" font-size="12" text-anchor="middle" fill="#222">O</text><text x="980" y="833.5" font-family="Liberation Sans" font-size="11.5" fill="#222">CH<tspan font-size="8" dy="3">3</tspan></text><text x="984.5" y="884.5" font-family="Liberation Sans" font-size="11.5" fill="#222">CH<tspan font-size="8" dy="3">3</tspan></text><circle cx="1034.7" cy="845.5" r="14.8" fill="#b0d0ef" stroke="#333" stroke-width="1.1"/><text x="595.5" y="1009" font-family="Liberation Sans" font-size="15.5" font-weight="400" text-anchor="start" fill="#111" textLength="364" lengthAdjust="spacingAndGlyphs" >LogD (pH=7.4): 3.40; pEC50 (CB2): 8.10</text></svg>
</body></html>
